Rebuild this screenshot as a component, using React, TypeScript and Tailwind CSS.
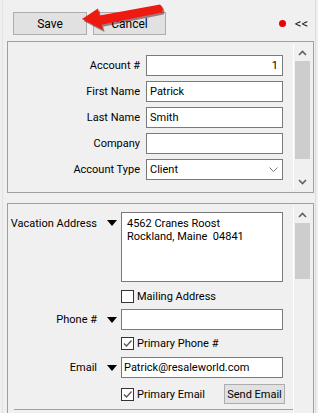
import { Fragment } from "react";

const font = { fontFamily: "Roboto, 'Liberation Sans', sans-serif" };

function Chevron({ up }: { up?: boolean }) {
    return (
        <svg width="9" height="6" viewBox="0 0 9 6" className="block">
            <path
                d={up ? "M1 5 L4.5 1.5 L8 5" : "M1 1 L4.5 4.5 L8 1"}
                fill="none"
                stroke="#606060"
                strokeWidth="1.6"
            />
        </svg>
    );
}

function ScrollBar({ thumbTop, thumbHeight, down }: { thumbTop: number; thumbHeight: number; down?: boolean }) {
    return (
        <div className="w-[17px] h-full flex flex-col items-center border-l border-white bg-[#f0f0f0]">
            <div className="h-[17px] w-full flex items-center justify-center">
                <Chevron up />
            </div>
            <div className="flex-1 w-full relative">
                <div
                    className="absolute left-[1px] right-0 bg-[#cdcdcd]"
                    style={{ top: thumbTop, height: thumbHeight }}
                />
            </div>
            {down && (
                <div className="h-[17px] w-full flex items-center justify-center">
                    <Chevron />
                </div>
            )}
        </div>
    );
}

function Triangle() {
    return (
        <svg width="10" height="6" viewBox="0 0 10 6" className="block">
            <path d="M0 0 H10 L5 6 Z" fill="#000" />
        </svg>
    );
}

function CheckBox({ checked, label }: { checked?: boolean; label: string }) {
    return (
        <div className="flex items-center gap-[3px] h-[13px]">
            <div className="w-[13px] h-[13px] border border-[#333] bg-white flex items-center justify-center">
                {checked && (
                    <svg width="11" height="11" viewBox="0 0 11 11">
                        <path d="M2 5.5 L4.5 8 L9.5 2.5" fill="none" stroke="#555" strokeWidth="1.3" />
                    </svg>
                )}
            </div>
            <span className="text-[11px] leading-none text-black">{label}</span>
        </div>
    );
}

const fields = [
    { label: "Account #", value: "1", right: true },
    { label: "First Name", value: "Patrick" },
    { label: "Last Name", value: "Smith" },
    { label: "Company", value: "" },
    { label: "Account Type", value: "Client", select: true },
];

export default function App() {
    return (
        <div className="w-[318px] h-[413px] bg-[#f0f0f0] relative overflow-hidden text-black" style={font}>
            <div className="absolute left-[2px] top-0 bottom-0 w-px bg-[#e3e3e3]" />
            <div className="absolute right-[2px] top-0 bottom-0 w-px bg-[#dcdcdc]" />

            {/* toolbar */}
            <div className="flex items-center pt-[12px] pl-[13px] pr-[10px]">
                <button className="w-[74px] h-[23px] border border-[#adadad] bg-[#e1e1e1] text-[12px] leading-none">
                    Save
                </button>
                <button className="ml-[6px] w-[73px] h-[23px] border border-[#adadad] bg-[#e1e1e1] text-[12px] leading-none">
                    Cancel
                </button>
                <div className="ml-auto flex items-center gap-[9px]">
                    <div className="w-[7px] h-[7px] rounded-full bg-[#ee0000]" />
                    <span className="text-[13px] leading-none text-[#111]">&lt;&lt;</span>
                </div>
            </div>

            {/* top panel */}
            <div className="ml-[7px] mt-[6px] w-[307px] h-[152px] border border-[#a0a0a0] flex p-[2px] pr-[3px]">
                <div className="flex-1 pt-[11px] flex flex-col gap-[5px]">
                    {fields.map((f) => (
                        <div key={f.label} className="flex items-center">
                            <div className="w-[130px] text-right text-[11px] leading-none">{f.label}</div>
                            <div className="ml-[6px] w-[137px] h-[21px] border border-[#7a7a7a] bg-white flex items-center px-[3px] text-[11px] leading-none">
                                <span className={f.right ? "ml-auto pr-[1px]" : ""}>{f.value}</span>
                                {f.select && (
                                    <span className="ml-auto pr-[1px]">
                                        <svg width="9" height="6" viewBox="0 0 9 6">
                                            <path d="M0.5 0.5 L4.5 4.5 L8.5 0.5" fill="none" stroke="#777" strokeWidth="1" />
                                        </svg>
                                    </span>
                                )}
                            </div>
                        </div>
                    ))}
                </div>
                <ScrollBar thumbTop={0} thumbHeight={98} down />
            </div>

            {/* bottom panel */}
            <div className="ml-[7px] mt-[10px] w-[307px] h-[230px] border border-[#a0a0a0] flex p-[2px] pr-[3px]">
                <div className="flex-1 pt-[6px] flex flex-col">
                    <div className="flex items-start">
                        <div className="w-[87px] text-right text-[11px] leading-none pt-[6px]">Vacation Address</div>
                        <div className="ml-[10px] pt-[8px]"><Triangle /></div>
                        <div className="ml-[4px] w-[162px] h-[70px] border border-[#7a7a7a] bg-white px-[5px] pt-[4px] text-[11px] leading-[13px]">
                            4562 Cranes Roost
                            <br />
                            Rockland, Maine&nbsp;&nbsp;04841
                        </div>
                    </div>
                    <div className="ml-[111px] mt-[8px]">
                        <CheckBox label="Mailing Address" />
                    </div>
                    <div className="flex items-center mt-[6px]">
                        <div className="w-[87px] text-right text-[11px] leading-none">Phone #</div>
                        <div className="ml-[10px]"><Triangle /></div>
                        <div className="ml-[4px] w-[162px] h-[21px] border border-[#7a7a7a] bg-white" />
                    </div>
                    <div className="ml-[111px] mt-[7px]">
                        <CheckBox checked label="Primary Phone #" />
                    </div>
                    <div className="flex items-center mt-[7px]">
                        <div className="w-[87px] text-right text-[11px] leading-none">Email</div>
                        <div className="ml-[10px]"><Triangle /></div>
                        <div className="ml-[4px] w-[162px] h-[21px] border border-[#7a7a7a] bg-white flex items-center px-[2px] text-[11px] leading-none">
                            Patrick@resaleworld.com
                        </div>
                    </div>
                    <div className="ml-[111px] mt-[6px] h-[20px] flex items-center">
                        <CheckBox checked label="Primary Email" />
                        <button className="ml-auto mr-[8px] w-[61px] h-[20px] border border-[#adadad] bg-[#e1e1e1] text-[11px] leading-none">
                            Send Email
                        </button>
                    </div>
                    <div className="mt-[5px] ml-[4px] border-t border-[#a0a0a0]" />
                </div>
                <ScrollBar thumbTop={0} thumbHeight={56} />
            </div>

            {/* annotation arrow */}
            <svg className="absolute left-0 top-0" width="318" height="50" viewBox="0 0 318 50">
                <g transform="translate(1.5,2)" opacity="0.45">
                    <path d="M97 16 L160 4.5 Q164.5 8 162 12.5 L100 25 Z" fill="#400" />
                    <path d="M82 19 L98 8.5 L103 30 Z" fill="#400" />
                </g>
                <path d="M97 16 L160 4.5 Q164.5 8 162 12.5 L100 25 Z" fill="#ee1a12" />
                <path d="M82 19 L98 8.5 L103 30 Z" fill="#ee1a12" />
            </svg>
        </div>
    );
}
